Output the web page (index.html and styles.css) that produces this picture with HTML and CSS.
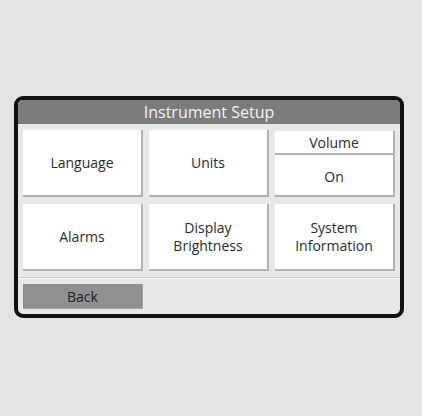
FILE: index.html
```html
<!DOCTYPE html>
<html lang="en">
<head>
    <meta charset="UTF-8">
    <meta name="viewport" content="width=device-width, initial-scale=1.0">
    <title>Instrument Setup</title>
    <link rel="stylesheet" href="styles.css">
</head>
<body>
    <div class="device">
        <div class="title-bar">Instrument Setup</div>

        <!-- Menu grid -->
        <div class="menu">
            <button class="cell">Language</button>
            <button class="cell">Units</button>
            <div class="split">
                <div class="split-label">Volume</div>
                <button class="split-value">On</button>
            </div>
            <button class="cell">Alarms</button>
            <button class="cell">Display<br>Brightness</button>
            <button class="cell">System<br>Information</button>
        </div>

        <div class="footer">
            <button class="back">Back</button>
        </div>
    </div>
</body>
</html>
```

FILE: styles.css
```css
body {
    margin: 0;
    width: 422px;
    height: 416px;
    background-color: #e4e4e2;
    font-family: "Open Sans", "Noto Sans", Arial, sans-serif;
    overflow: hidden;
}
.device {
    box-sizing: border-box;
    width: 390px;
    height: 222px;
    margin: 96px 0 0 14px;
    border: 4px solid #111;
    border-radius: 9px;
    background-color: #e8e8e7;
    overflow: hidden;
}
.title-bar {
    height: 24px;
    line-height: 24px;
    background-color: #7b7c7c;
    color: #f2f2f2;
    font-size: 16px;
    text-align: center;
}
.menu {
    display: grid;
    grid-template-columns: repeat(3, 120px);
    grid-template-rows: 67px 67px;
    column-gap: 6px;
    row-gap: 7px;
    padding: 6px 5px 0 5px;
}
button {
    font-family: inherit;
    cursor: pointer;
}
.cell {
    box-sizing: border-box;
    background-color: #fff;
    border: none;
    border-right: 2px solid #b2b2b2;
    border-bottom: 2px solid #b2b2b2;
    color: #2b2b2b;
    font-size: 14px;
    line-height: 18px;
    padding: 0;
}
.split {
    display: flex;
    flex-direction: column;
    padding-top: 1px;
}
.split-label {
    height: 22px;
    line-height: 23px;
    background-color: #fff;
    border-right: 2px solid #b2b2b2;
    border-bottom: 2px solid #b2b2b2;
    color: #2b2b2b;
    font-size: 14px;
    text-align: center;
}
.split-value {
    flex: 1;
    background-color: #fff;
    border: none;
    border-right: 2px solid #b2b2b2;
    border-bottom: 2px solid #b2b2b2;
    color: #2b2b2b;
    font-size: 14px;
    padding: 2px 0 0 0;
}
.footer {
    margin-top: 6px;
    border-top: 1px solid #cbcbcb;
    box-shadow: inset 0 1px 0 #f7f7f7;
    padding: 6px 5px 5px 5px;
}
.back {
    display: block;
    width: 120px;
    height: 25px;
    background-color: #8f9191;
    border: none;
    border-right: 1px solid #a5a6a6;
    border-bottom: 1px solid #a5a6a6;
    color: #222;
    font-size: 14px;
    padding: 0;
}
```
